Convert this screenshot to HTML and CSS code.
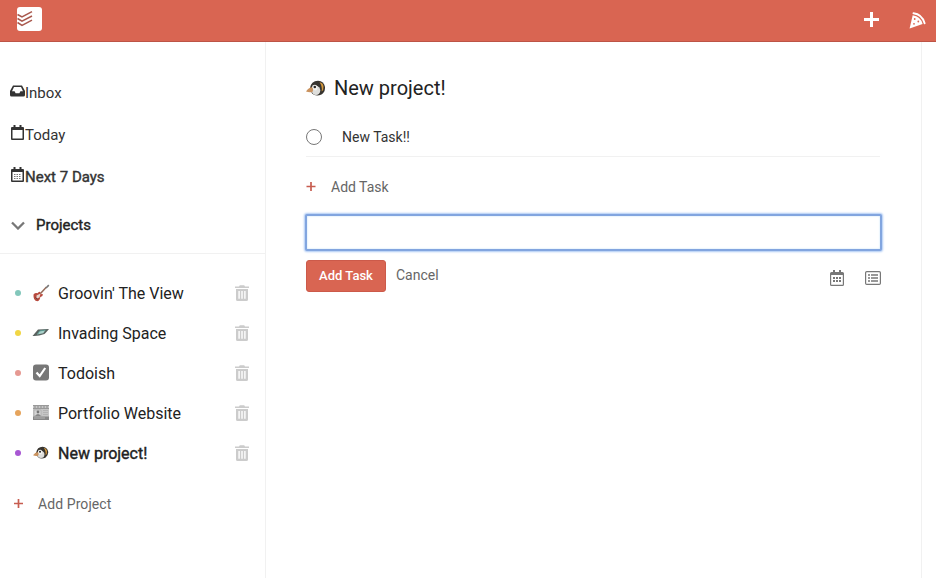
FILE: index.html
```html
<!DOCTYPE html>
<html lang="en">
<head>
<meta charset="utf-8">
<title>Todoish</title>
<link rel="stylesheet" href="styles.css">
</head>
<body>
<svg class="defs" width="0" height="0">
  <symbol id="trash" viewBox="0 0 14 16"><path d="M0 1.4h4L4.8.3h4.4l.8 1.1h4v1.5H0z"/><path fill-rule="evenodd" d="M1 4h12v10.500q0 1.500-1.500 1.500h-9Q1 16 1 14.500zM3.400 6v7.700h1.400V6zM6.300 6v7.700h1.400V6zM9.200 6v7.700h1.400V6z"/></symbol>
  <symbol id="penguin" viewBox="0 0 20 16">
    <path d="M4 8Q5 1 12 .7q6 .5 7 6.300.3 5-3.500 7.500Q10 17 6 13.500z" fill="#37342f"/>
    <path d="M13.500 2.300q3.500.5 4 4.200.3 3.500-1.800 5Q16.500 6 13.500 2.300z" fill="#d6993c"/>
    <ellipse cx="10" cy="10.500" rx="4.300" ry="4.500" fill="#dededb"/>
    <path d="M6.500 5.500Q10 3.500 11.500 6.500q.5 3-1.500 4-3-.2-4-3z" fill="#f3f3f0"/>
    <circle cx="8.800" cy="7" r="1.300" fill="#292725"/>
    <path d="M0 11.500Q2.500 7.500 6 7.300q2 2.500.3 4.700-3 .8-6.300-.5z" fill="#ca925e"/>
  </symbol>
</svg>
<header class="topbar">
  <svg class="logo" width="25" height="24" viewBox="0 0 25 24"><rect width="25" height="24" rx="3" fill="#fff"/><g fill="none" stroke="#a9584d" stroke-width="1.500"><path d="M.5 7.500 5 10l10-5.300M.5 11.500 5 14.200 15 9M.5 15.500 5 18.400l10-5.300"/></g></svg>
  <div class="actions">
    <svg width="15" height="15" viewBox="0 0 15 15"><path d="M6 0h3v6h6v3H9v6H6V9H0V6h6z" fill="#fff"/></svg>
    <svg width="17" height="17" viewBox="0 0 17 17"><path d="M3.700 3.200Q11.500 4.200 13.600 12L.6 16.400z" fill="#fff"/><path d="M4.500 1.300q8.500 1 11.100 10" fill="none" stroke="#fff" stroke-width="1.900" stroke-linecap="round"/><g fill="#d96552"><circle cx="5.700" cy="7" r=".9"/><circle cx="9.300" cy="9.500" r=".9"/><circle cx="5" cy="11.800" r=".9"/></g></svg>
  </div>
</header>
<div class="layout">
  <aside class="sidebar">
    <ul class="views">
      <li><svg width="15" height="12" viewBox="0 0 15 12"><path fill-rule="evenodd" d="M3 .5h9L15 6v4q0 1.500-1.500 1.500h-12Q0 11.500 0 10V6zM4 2 2 6.200h2.600l1 2h3.800l1-2H13L11 2z" fill="#333"/></svg><span>Inbox</span></li>
      <li><svg width="15" height="16" viewBox="0 0 15 16"><path fill-rule="evenodd" d="M3.500 0h2v2h4V0h2v2H13q1 0 1 1v11q0 1-1 1H2q-1 0-1-1V3q0-1 1-1h1.500zM2.500 5v8.500h10V5z" fill="#333"/></svg><span>Today</span></li>
      <li class="strong"><svg width="15" height="16" viewBox="0 0 15 16"><path fill-rule="evenodd" d="M3.500 0h2v2h4V0h2v2H13q1 0 1 1v11q0 1-1 1H2q-1 0-1-1V3q0-1 1-1h1.500zM2.500 5v8.500h10V5z" fill="#333"/><path d="M4 7.500h7.500M4 9.500h7.500M4 11.500h7.500" stroke="#777" stroke-dasharray="1.500 1"/></svg><span>Next 7 Days</span></li>
    </ul>
    <div class="heading"><svg width="14" height="9" viewBox="0 0 14 9"><path d="m1 1.500 6 6 6-6" fill="none" stroke="#777" stroke-width="2.300"/></svg><span>Projects</span></div>
    <ul class="projects">
      <li><i class="dot teal"></i><svg class="emoji" width="18" height="18" viewBox="0 0 18 18"><path d="M8 10 14.500 3" stroke="#956b5a" stroke-width="1.500"/><path d="m13.500 3.500 2.700-3 1.200 1.300-2.800 2.700z" fill="#777"/><path d="M1.500 10.500q1.800-2 4-1.200Q7 7 8.300 8q-.5 1.500.5 2.200 2-.5 2.200.5-.5 2-2.700 2.300-.3 3.500-2.800 4.200Q1 17 1.500 10.500z" fill="#b8493d"/><path d="m4.500 11.500 4-2-1 4-3 1z" fill="#e9d6cf"/><path d="m3.500 13.500 2 1.800" stroke="#574440"/></svg><span>Groovin' The View</span><svg class="trash" width="14" height="16"><use href="#trash"/></svg></li>
      <li><i class="dot yellow"></i><svg class="emoji" width="18" height="18" viewBox="0 0 18 18"><path d="M.5 12 6 5.500 17 5q-2 2.500-4.500 5Q6 12.500.5 12z" fill="#59625f"/><path d="M5 10.500 7.500 7l6-1-2.200 3.300z" fill="#a9d1ca"/><path d="m5.500 10.500 2-3.500 6-1" fill="none" stroke="#54968d" stroke-width=".9"/></svg><span>Invading Space</span><svg class="trash" width="14" height="16"><use href="#trash"/></svg></li>
      <li><i class="dot pink"></i><svg class="emoji" width="18" height="18" viewBox="0 0 18 18"><rect x="1" y=".5" width="16" height="16" rx="3" fill="#777"/><path d="m4.500 8.500 3.200 3.500 5.500-8" fill="none" stroke="#fff" stroke-width="2.200"/></svg><span>Todoish</span><svg class="trash" width="14" height="16"><use href="#trash"/></svg></li>
      <li><i class="dot orange"></i><svg class="emoji" width="18" height="18" viewBox="0 0 18 18"><path d="M1 1h16v15H1z" fill="#c6c6c6"/><path d="M1 1.500h16M1 4.500h16" stroke="#999"/><path d="M2 3h14" stroke="#8b8b8b" stroke-dasharray="2 1"/><path d="M2 6h7v6H2zM11 6.500h5M11 8.500h5M11 10.500h5" fill="#d5d5d5" stroke="#aaa" stroke-width=".7"/><circle cx="6" cy="8" r="1.400" fill="#777"/><path d="M3 12q3-4 6 0zM1 12.500h16V16H1z" fill="#888"/><path d="M2 14h11" stroke="#b5b5b5"/></svg><span>Portfolio Website</span><svg class="trash" width="14" height="16"><use href="#trash"/></svg></li>
      <li class="active"><i class="dot purple"></i><svg class="emoji" width="18" height="18" viewBox="0 0 18 18"><use href="#penguin" x="1" y="2" width="16" height="13"/></svg><span>New project!</span><svg class="trash" width="14" height="16"><use href="#trash"/></svg></li>
    </ul>
    <div class="add-project"><svg width="9" height="9" viewBox="0 0 9 9"><path d="M4.500 0v9M0 4.500h9" stroke="#c75d50" stroke-width="1.700"/></svg><span>Add Project</span></div>
  </aside>
  <main class="content">
    <h1><svg width="20" height="16"><use href="#penguin"/></svg><span>New project!</span></h1>
    <div class="task"><i class="circle"></i><span>New Task!!</span></div>
    <div class="add-task"><svg width="10" height="9" viewBox="0 0 10 9"><path d="M5 0v9M.5 4.500h9" stroke="#c75d50" stroke-width="1.700"/></svg><span>Add Task</span></div>
    <input class="field" type="text" aria-label="Task">
    <div class="controls">
      <button>Add Task</button><span class="cancel">Cancel</span>
      <svg class="cal" width="14" height="16" viewBox="0 0 14 16"><path fill-rule="evenodd" d="M3 0h2v2h4V0h2v2h1.500Q14 2 14 3.500v11q0 1.500-1.500 1.500h-11Q0 16 0 14.500v-11Q0 2 1.500 2H3zM1.200 5v9.700h11.600V5z" fill="#777"/><path d="M3 8h8M3 11h8" stroke="#777" stroke-width="1.800" stroke-dasharray="2 1"/></svg>
      <svg width="16" height="14" viewBox="0 0 16 14"><rect x=".6" y=".6" width="14.800" height="12.800" rx="1.200" fill="none" stroke="#777" stroke-width="1.200"/><path d="M3 4h2m1 0h7M3 7h2m1 0h7M3 10h2m1 0h7" stroke="#777" stroke-width="1.600"/></svg>
    </div>
  </main>
</div>
</body>
</html>
```
FILE: styles.css
```css
* { box-sizing: border-box; }
body { margin: 0; background: #fff; color: #333; font-family: Roboto, sans-serif; font-size: 15px; overflow: hidden; }
ul, h1 { margin: 0; padding: 0; list-style: none; font-weight: 400; }
svg { display: block; flex: none; }
span { white-space: nowrap; }
.defs { position: absolute; }
.topbar { height: 42px; background: #d96552; border-bottom: 1px solid #bd5446; display: flex; justify-content: space-between; align-items: flex-start; padding: 7px 10px 0 17px; }
.actions { display: flex; gap: 30px; padding-top: 5px; }
.layout { display: flex; height: 536px; }
.sidebar { width: 266px; border-right: 1px solid #f1f1f1; }
.views { padding: 30px 0 0 10px; }
.views li { display: flex; align-items: center; height: 42px; }
.views svg { margin-top: -4px; }
.strong span { -webkit-text-stroke: .4px #333; }
.heading { display: flex; align-items: center; gap: 11px; height: 57px; margin-top: -1px; padding-left: 11px; border-bottom: 1px solid #f1f1f1; }
.heading span { -webkit-text-stroke: .4px #222; color: #222; }
.projects { padding-top: 19px; font-size: 16px; color: #222; }
.projects li { height: 40px; display: flex; align-items: center; padding: 0 16px 0 15px; }
.dot { width: 6px; height: 6px; border-radius: 50%; margin-right: 11px; }
.teal { background: #83c7bb; }
.yellow { background: #f1d644; }
.pink { background: #e69992; }
.orange { background: #e6a45c; }
.purple { background: #a857d3; }
.emoji { margin-right: 8px; }
.trash { margin-left: auto; fill: #ccc; }
.active span { -webkit-text-stroke: .4px #222; }
.add-project { display: flex; align-items: center; gap: 15px; padding-left: 14px; height: 40px; margin-top: 11px; font-size: 14px; letter-spacing: .08px; color: #666; }
.add-project svg { margin-top: -2px; }
.content { width: 656px; border-right: 1px solid #f1f1f1; padding: 28px 40px 0; }
h1 { display: flex; align-items: center; height: 36px; gap: 8px; font-size: 20px; color: #222; }
.task { height: 51px; display: flex; align-items: center; border-bottom: 1px solid #f1f1f1; padding-top: 12px; font-size: 14px; width: 574px; }
.circle { width: 16px; height: 16px; border: 1px solid #777; border-radius: 50%; margin-right: 20px; }
.add-task { display: flex; align-items: center; gap: 15px; height: 57px; padding-top: 2px; font-size: 14px; color: #666; }
.field { display: block; width: 577px; height: 37px; margin-left: -1px; border: 2px solid #82a5df; outline: none; box-shadow: 0 0 2px 1px #acc9f4, inset 0 0 2px #bcdcf7; border-radius: 2px; }
.controls { display: flex; align-items: center; margin-top: 9px; height: 32px; font-size: 14px; color: #666; }
.cancel { margin-top: -2px; }
button { width: 80px; height: 32px; padding: 0 0 2px; border: 1px solid #cc5a4a; border-radius: 3px; background: #d96552; color: #fff; font: 500 13px Roboto, sans-serif; margin-right: 10px; }
.cal { margin: 4px 21px 0 auto; }
.cal + svg { margin-top: 4px; }
```
